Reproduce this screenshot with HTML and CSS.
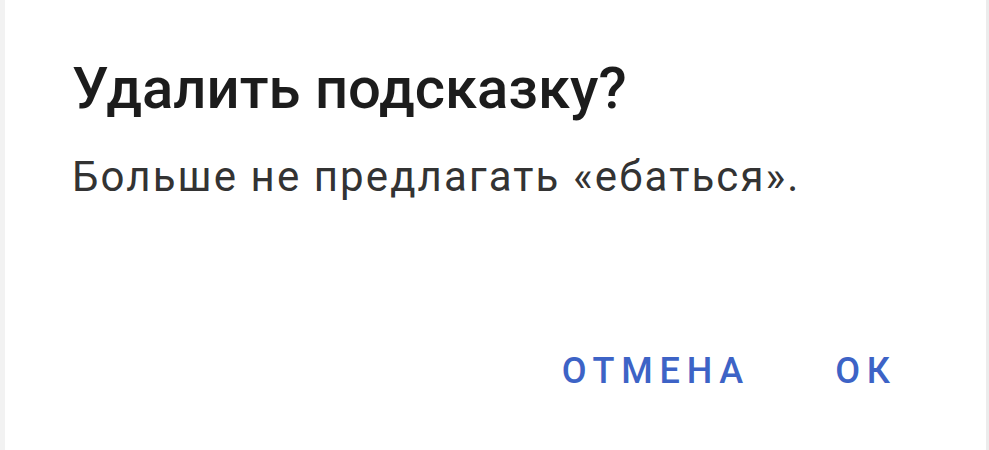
FILE: index.html
```html
<!DOCTYPE html>
<html lang="ru">
<head>
<meta charset="utf-8">
<link rel="stylesheet" href="styles.css">
</head>
<body>
<div class="dialog">
  <h1 class="title">Удалить подсказку?</h1>
  <p class="message">Больше не предлагать «ебаться».</p>
  <div class="actions">
    <button class="btn">ОТМЕНА</button>
    <button class="btn">ОК</button>
  </div>
</div>
</body>
</html>
```
FILE: styles.css
```css
html, body {
  margin: 0;
  padding: 0;
  background: #ffffff;
}
.dialog {
  width: 989px;
  height: 450px;
  box-sizing: border-box;
  border-left: 5px solid #f2f2f2;
  border-right: 3px solid #ececec;
  background: #ffffff;
  display: flex;
  flex-direction: column;
  padding: 0 0 0 67px;
  font-family: Roboto, "Noto Sans", sans-serif;
}
.title {
  margin: 53px 0 0 0;
  font-size: 58px;
  line-height: 70px;
  font-weight: 500;
  color: #1c1c1c;
}
.message {
  margin: 28px 0 0 0;
  font-size: 42px;
  line-height: 52px;
  font-weight: 400;
  letter-spacing: 2.1px;
  color: #333333;
}
.actions {
  margin-top: auto;
  margin-bottom: 58px;
  display: flex;
  justify-content: flex-end;
  gap: 92px;
  padding-right: 96px;
}
.btn {
  border: none;
  background: transparent;
  padding: 0;
  font-family: Roboto, "Noto Sans", sans-serif;
  font-size: 36px;
  font-weight: 500;
  letter-spacing: 6.8px;
  margin-right: -6.8px;
  color: #3d63c6;
}
```
